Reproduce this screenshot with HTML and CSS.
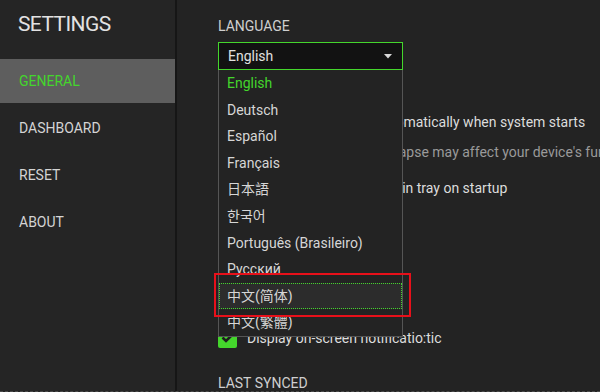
FILE: index.html
```html
<!DOCTYPE html>
<html lang="en">
<head>
    <meta charset="UTF-8">
    <meta name="viewport" content="width=device-width, initial-scale=1.0">
    <title>Settings</title>
    <link rel="stylesheet" href="styles.css">
</head>
<body>
    <div class="app">
        <aside class="sidebar">
            <h1 class="title">SETTINGS</h1>
            <nav class="nav">
                <div class="nav-item active">GENERAL</div>
                <div class="nav-item">DASHBOARD</div>
                <div class="nav-item">RESET</div>
                <div class="nav-item">ABOUT</div>
            </nav>
        </aside>

        <main class="main">
            <div class="section-label">LANGUAGE</div>
            <div class="dropdown">
                <div class="select">
                    <span>English</span>
                    <svg class="caret" width="8" height="5" viewBox="0 0 8 5"><path d="M0 0h8L4 4.5z" fill="#d8d8d8"/></svg>
                </div>
                <ul class="options">
                    <li class="selected">English</li>
                    <li>Deutsch</li>
                    <li>Español</li>
                    <li>Français</li>
                    <li>日本語</li>
                    <li>한국어</li>
                    <li>Português (Brasileiro)</li>
                    <li>Русский</li>
                    <li class="focused">中文(简体)</li>
                    <li>中文(繁體)</li>
                </ul>
            </div>

            <div class="option first">
                <span class="checkbox"><svg width="13" height="10" viewBox="0 0 13 10"><path d="M1.5 4.5l3.5 3.5 6.5-6.5" stroke="#1e1e1e" stroke-width="2.6" fill="none"/></svg></span>
                <span>Start Razer Synapse automatically when system starts</span>
            </div>
            <div class="note">Disabling the Razer Synapse may affect your device's functionality.</div>
            <div class="option third">
                <span class="checkbox"><svg width="13" height="10" viewBox="0 0 13 10"><path d="M1.5 4.5l3.5 3.5 6.5-6.5" stroke="#1e1e1e" stroke-width="2.6" fill="none"/></svg></span>
                <span>Minimize Razer Synapse in tray on startup</span>
            </div>

            <div class="section-label hidden-label">NOTIFICATIONS</div>
            <div class="option notify">
                <span class="checkbox"><svg width="13" height="10" viewBox="0 0 13 10"><path d="M1.5 4.5l3.5 3.5 6.5-6.5" stroke="#1e1e1e" stroke-width="2.6" fill="none"/></svg></span>
                <span>Display on-screen notificatio:tic</span>
            </div>

            <div class="section-label synced">LAST SYNCED</div>
        </main>

        <div class="callout"></div>
    </div>
</body>
</html>
```

FILE: styles.css
```css
* {
    box-sizing: border-box;
}
body {
    margin: 0;
    background: #232323;
    font-family: Roboto, "Noto Sans CJK SC", "Noto Sans CJK KR", sans-serif;
    color: #d8d8d8;
    overflow: hidden;
}
.app {
    position: relative;
    display: flex;
    height: 392px;
    border-bottom: 1px dashed #4a4a4a;
}
.sidebar {
    width: 177px;
    flex-shrink: 0;
    background: #252525;
    border-right: 2px solid #161616;
}
.title {
    margin: 0;
    padding: 12px 0 0 18px;
    height: 59px;
    font-size: 21px;
    font-weight: 400;
    letter-spacing: -0.6px;
    line-height: 24px;
    color: #e2e2e2;
}
.nav-item {
    height: 44px;
    margin-bottom: 3px;
    padding-left: 19px;
    line-height: 44px;
    font-size: 14px;
    color: #d4d4d4;
}
.nav-item.active {
    background: #5e5e5e;
    color: #44d62c;
}
.main {
    flex: 1;
    min-width: 0;
    padding: 18px 0 0 41px;
    background: #232323;
    overflow: hidden;
}
.section-label {
    font-size: 14px;
    line-height: 16px;
    color: #cfcfcf;
}
.dropdown {
    position: relative;
    width: 185px;
    margin-top: 8px;
    z-index: 2;
}
.select {
    display: flex;
    align-items: center;
    justify-content: space-between;
    height: 28px;
    padding: 0 10px 0 9px;
    background: #121212;
    border: 1px solid #44d62c;
    font-size: 14px;
    color: #e0e0e0;
}
.options {
    position: absolute;
    top: 100%;
    left: 0;
    width: 100%;
    margin: 0;
    padding: 0;
    list-style: none;
    background: #232323;
    border: 1px solid #555;
    border-top: 0;
}
.options li {
    height: 26.6px;
    line-height: 26px;
    padding-left: 8px;
    font-size: 14px;
    color: #d6d6d6;
}
.options li.selected {
    color: #44d62c;
}
.options li.focused {
    background: #2c2c2c;
    outline: 1px dotted #44d62c;
    outline-offset: -1px;
}
.option {
    display: flex;
    align-items: center;
    gap: 10px;
    height: 20px;
    font-size: 14px;
    color: #dcdcdc;
    white-space: nowrap;
}
.option.first {
    margin-top: 42px;
}
.option.third {
    margin-top: 16px;
}
.note {
    margin-top: 10px;
    padding-left: 35px;
    line-height: 20px;
    font-size: 14px;
    color: #9a9a9a;
    white-space: nowrap;
}
.checkbox {
    display: flex;
    align-items: center;
    justify-content: center;
    width: 19px;
    height: 19px;
    border-radius: 2px;
    background: #44d62c;
    flex-shrink: 0;
}
.hidden-label {
    margin-top: 40px;
}
.option.notify {
    margin-top: 74px;
}
.synced {
    margin-top: 27px;
}
.callout {
    position: absolute;
    left: 214px;
    top: 273px;
    width: 197px;
    height: 44px;
    border: 2px solid #e8101a;
    z-index: 3;
}
```
